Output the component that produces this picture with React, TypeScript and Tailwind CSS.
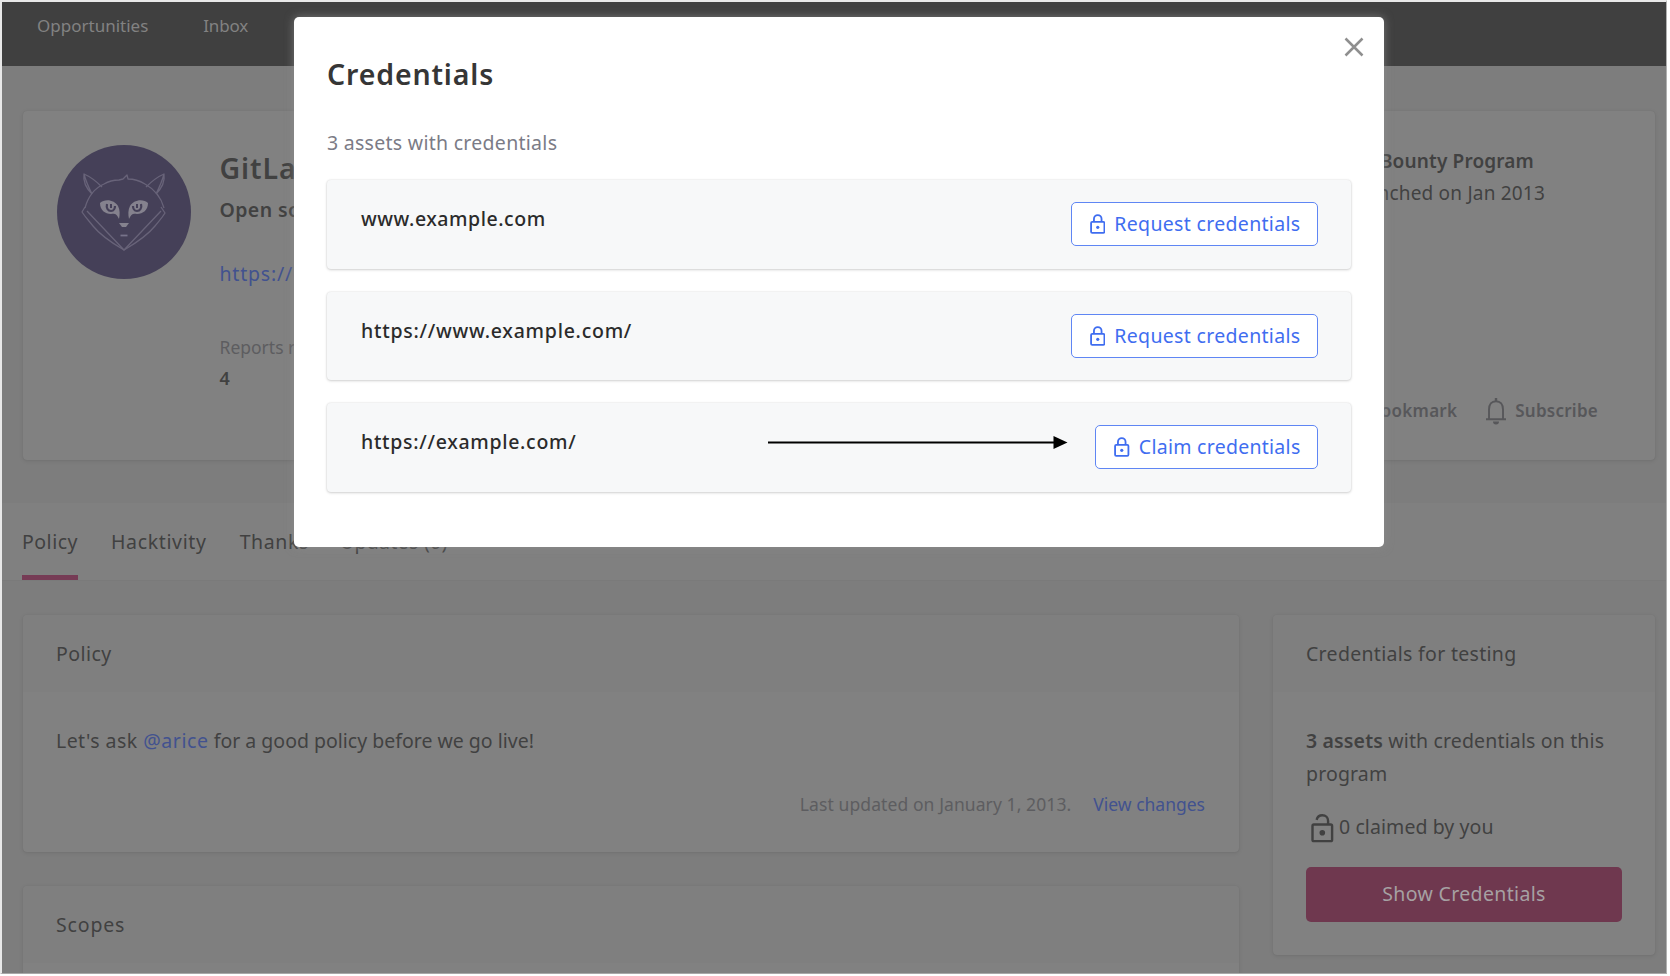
import type { ReactNode } from "react";

function LockIcon({ className }: { className?: string }) {
  return (
    <svg viewBox="0 0 16 21" className={className} fill="none" stroke="currentColor" strokeWidth="1.9">
      <rect x="1" y="8.2" width="14" height="11.6" rx="1.2" />
      <path d="M4 8V5.2a4 4 0 0 1 8 0V8" />
      <circle cx="8" cy="14" r="1.7" fill="currentColor" stroke="none" />
    </svg>
  );
}

function UnlockIcon() {
  return (
    <svg viewBox="0 0 23 30" className="h-[30px] w-[23px]" fill="none" stroke="currentColor" strokeWidth="2.4">
      <rect x="1.5" y="11.5" width="19.6" height="16.6" rx="1.4" />
      <path d="M5.6 6.9C6.4 3.9 8.4 2.3 11.3 2.3c3.400 0 5.800 2.300 5.800 5.600V11.500" />
      <circle cx="11.3" cy="19.8" r="2.8" fill="currentColor" stroke="none" />
    </svg>
  );
}

function BellIcon() {
  return (
    <svg viewBox="0 0 22 28" className="h-7 w-[22px]" fill="none" stroke="currentColor" strokeWidth="1.9">
      <path d="M1 22.300h20M4 22V12.500C4 7.500 6.600 4.200 11 4.200s7 3.300 7 8.300V22" />
      <path d="M11 1v3" strokeWidth="2.4" />
      <path d="M8 24.600h6a3 3 0 0 1-6 0z" fill="currentColor" stroke="none" />
    </svg>
  );
}

function Logo() {
  return (
    <svg viewBox="0 0 134 134" className="mt-[34px] ml-[34px] size-[134px] shrink-0" fill="none">
      <circle cx="67" cy="67" r="67" fill="#454058" />
      <g stroke="#686379" strokeWidth="1.3" strokeLinejoin="round">
        <path d="M35 49C29 43 26 36 27 29c7 3 12 7 18 13M35 49c-3-6-6-12-8-20" />
        <path d="M99 49c6-6 9-13 8-20-7 3-12 7-18 13M99 49c3-6 6-12 8-20" />
        <path d="M28 63c3-11 10-20 19-24 5-3 10-4 15-4l4-1 4-4 1 4c6 0 12 2 17 5 9 5 16 13 19 24" />
        <path d="M28 62l-3 5c4 6 7 9 11 14 8 10 19 17 31 24 12-7 23-14 31-24 4-5 7-8 10-13l-4-6" />
        <path d="M30 66l37 39 37-39" />
      </g>
      <path d="M43 58c5-5 15-3 18 3 2 4 2 8 1 13-2-5-4-6-8-5-6 0-11-4-11-11z" fill="#85828e" />
      <path d="M91 58c-5-5-15-3-18 3-2 4-2 8-1 13 2-5 4-6 8-5 6 0 11-4 11-11z" fill="#85828e" />
      <path d="M50 59c-1 4 1 7 4 7s4-3 4-5M76 61c0 2 1 5 4 5s5-3 4-7" stroke="#454058" strokeWidth="2.2" />
      <path d="M54 59v4M80 59v4" stroke="#454058" strokeWidth="2" />
      <path d="M62 78h10l-3 4h-4z" fill="#85828e" />
      <path d="M63.500 90.500h7" stroke="#77738a" strokeWidth="1.8" />
    </svg>
  );
}

function Card({ className, children }: { className: string; children?: ReactNode }) {
  return (
    <div className={`rounded-[4px] bg-[#818181] shadow-[0_1px_4px_rgba(0,0,0,0.1),0_0_1px_rgba(0,0,0,0.1)] ${className}`}>
      {children}
    </div>
  );
}

function CardHeader({ children }: { children: ReactNode }) {
  return (
    <div className="h-[77px] rounded-t-[4px] bg-[#7f7f7f] pt-[29px] pl-[33px] text-[19.5px] leading-5">
      {children}
    </div>
  );
}

function AssetRow({ name, action, arrow }: { name: ReactNode; action: ReactNode; arrow?: boolean }) {
  return (
    <div className="relative flex h-[88.5px] items-start justify-between rounded-[4px] bg-[#f7f8f9] pt-[22.4px] pr-[33.5px] pl-[34px] shadow-[0_1px_3px_rgba(0,0,0,0.16),0_0_2px_rgba(0,0,0,0.12)]">
      <div className="mt-[7px] text-[19.5px] leading-5 font-medium text-[#2b2b2b]">{name}</div>
      {arrow && (
        <svg className="absolute top-[32px] left-[441px] h-4 w-[300px]" viewBox="0 0 300 16">
          <path d="M0 7.500h288" stroke="#000" strokeWidth="2.2" />
          <path d="M285.500 1l14 6.500-14 6.500z" fill="#000" />
        </svg>
      )}
      <button className="flex h-[44px] items-center rounded-[5px] border-[1.5px] border-[#5f86f4] bg-white pr-4 pl-[18px] text-[19.5px] leading-5 text-[#3f6df0]">
        <LockIcon className="mr-[9px] h-5 w-[15.5px]" />
        {action}
      </button>
    </div>
  );
}

export default function App() {
  return (
    <div className="relative h-[974px] w-[1667px] overflow-hidden border-t-2 border-r border-b border-l-2 border-t-[#e8e8e8] border-r-[#b0b0b0] border-b-[#a8a8a8] border-l-[#e8e8e8] bg-[#7d7d7d] font-['Noto_Sans',sans-serif] text-[#414141]">
      <nav className="flex h-16 gap-[55px] bg-[#404040] pt-[14px] pl-[35px] text-[17px] leading-5 text-[#828282]">
        <span>Opportunities</span>
        <span className="-tracking-[0.2px]">Inbox</span>
      </nav>

      <Card className="mt-[45px] ml-[21px] flex h-[349px] w-[1632px]">
        <Logo />
        <div className="ml-[28.5px] flex w-[300px] flex-col">
          <div className="mt-[41px] text-[28.5px] leading-8 font-semibold tracking-[0.9px] whitespace-nowrap">GitLab</div>
          <div className="mt-[16px] text-[19.5px] leading-5 font-semibold tracking-[0.4px] whitespace-nowrap">Open source</div>
          <div className="mt-[44px] text-[19.5px] leading-5 tracking-[0.8px] text-[#42528f]">https://gitlab.com</div>
          <div className="mt-[53px] text-[17.5px] leading-5 text-[#5d5d60]">Reports resolved</div>
          <div className="mt-[11px] text-[18px] leading-5 font-semibold">4</div>
        </div>
        <div className="ml-auto flex w-[400px] flex-col">
          <div className="mt-10 mr-[121px] text-right text-[19px] leading-5 font-semibold tracking-[0.15px] whitespace-nowrap">Bug Bounty Program</div>
          <div className="mt-3 mr-[110px] text-right text-[19px] leading-5 tracking-[0.2px] whitespace-nowrap">Launched on Jan 2013</div>
          <div className="mt-[193.5px] mr-[57px] flex items-center justify-end text-[17px] leading-5 font-semibold tracking-[0.25px] text-[#57575a]">
            <span>Bookmark</span>
            <span className="mr-[8px] ml-[28px]"><BellIcon /></span>
            <span>Subscribe</span>
          </div>
        </div>
      </Card>

      <div className="mt-[43px] flex h-[78px] gap-[33px] border-b border-[#7a7a7a] bg-[#808080] pl-5 text-[19.5px] leading-5">
        <div className="border-b-[5px] border-[#763b55] pt-[29px] tracking-[0.5px]">Policy</div>
        <div className="pt-[29px] tracking-[0.65px]">Hacktivity</div>
        <div className="pt-[29px] tracking-[0.6px]">Thanks</div>
        <div className="-ml-[2px] pt-[29px] tracking-[0.3px]">Updates (0)</div>
      </div>

      <div className="flex items-start gap-[34px] pt-[34px] pl-[21px]">
        <div className="flex w-[1216px] flex-col gap-[34px]">
          <Card className="h-[237px]">
            <CardHeader><span className="tracking-[0.45px]">Policy</span></CardHeader>
            <div className="pt-[39px] pl-[33px] text-[19.5px] leading-5 whitespace-nowrap">
              <span className="tracking-[0.45px]">Let's ask </span>
              <span className="tracking-[0.6px] text-[#42528f]">@arice</span> for a good policy before we go live!
            </div>
            <div className="flex justify-end gap-[22px] pt-[43px] pr-[34px] text-[17.5px] leading-5">
              <span className="tracking-[0.09px] text-[#5d5d60]">Last updated on January 1, 2013.</span>
              <span className="text-[#42528f]">View changes</span>
            </div>
          </Card>
          <Card className="h-[120px]">
            <CardHeader><span className="tracking-[0.85px]">Scopes</span></CardHeader>
          </Card>
        </div>
        <Card className="h-[340px] w-[382px]">
          <CardHeader><span className="tracking-[0.3px]">Credentials for testing</span></CardHeader>
          <div className="px-[33px] pt-[32px]">
            <div className="text-[19.5px] leading-[33px] tracking-[0.15px] whitespace-nowrap">
              <b className="font-semibold">3 assets</b> with credentials on this<br />program
            </div>
            <div className="mt-[23px] ml-[5px] flex h-[30px] items-center text-[19.5px] leading-5 tracking-[0.08px]">
              <UnlockIcon />
              <span className="-mt-[2px] ml-[5px]">0 claimed by you</span>
            </div>
            <button className="mt-[24px] flex h-[54.5px] w-[316px] items-center justify-center rounded-[5px] bg-[#6f384f] text-[19.5px] leading-5 tracking-[0.35px] text-[#a6a1a3]">
              Show Credentials
            </button>
          </div>
        </Card>
      </div>

      <div className="absolute top-[15px] left-[292px] flex h-[530px] w-[1090px] flex-col rounded-[5px] bg-white px-[33px] shadow-[0_0_10px_rgba(140,140,140,0.7)]">
        <svg className="absolute top-[20px] right-[20px] size-5" viewBox="0 0 20 20" fill="none" stroke="#8f8f8f" strokeWidth="2.5">
          <path d="M1.500 1.500l17 17M18.500 1.500l-17 17" />
        </svg>
        <h2 className="mt-[41px] text-[28.5px] leading-8 font-semibold tracking-[0.85px] text-[#363636]">Credentials</h2>
        <p className="mt-[43px] text-[19.5px] leading-5 tracking-[0.28px] text-[#7b7b86]">3 assets with credentials</p>
        <div className="mt-[27px] flex flex-col gap-[23px]">
          <AssetRow
            name={<span className="tracking-[0.54px]">www.example.com</span>}
            action={<span className="tracking-[0.32px]">Request credentials</span>}
          />
          <AssetRow
            name={<span className="tracking-[0.75px]">https://www.example.com/</span>}
            action={<span className="tracking-[0.32px]">Request credentials</span>}
          />
          <AssetRow
            name={<span className="tracking-[0.7px]">https://example.com/</span>}
            action={<span className="tracking-[0.27px]">Claim credentials</span>}
            arrow
          />
        </div>
      </div>
    </div>
  );
}
